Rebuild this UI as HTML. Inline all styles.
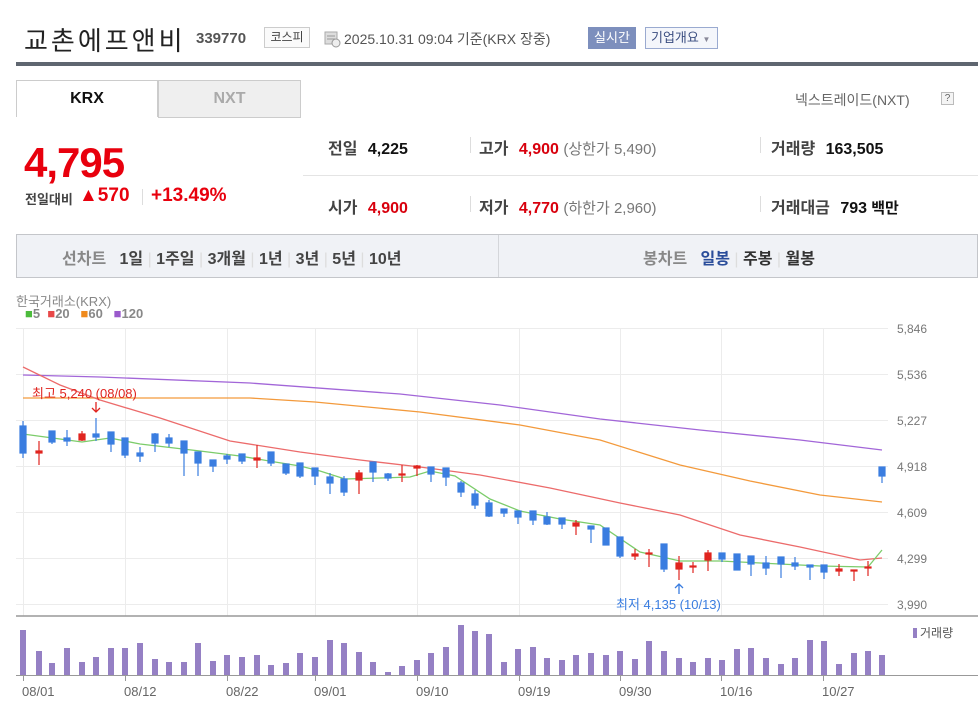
<!DOCTYPE html>
<html><head><meta charset="utf-8"><style>
*{margin:0;padding:0;box-sizing:border-box}
body{width:978px;height:716px;background:#fff;font-family:"Liberation Sans","Noto Sans CJK KR",sans-serif;position:relative;overflow:hidden;color:#333}
.a{position:absolute;white-space:nowrap}
</style></head><body>
<div class="a" style="left:24px;top:21px;font-size:26px;color:#222;letter-spacing:3px">교촌에프앤비</div>
<div class="a" style="left:196px;top:30px;font-size:15px;font-weight:bold;color:#555">339770</div>
<div class="a" style="left:264px;top:27px;width:46px;height:21px;border:1px solid #ccc;background:#fafafa;font-size:12px;color:#444;text-align:center;line-height:19px">코스피</div>
<svg class="a" style="left:324px;top:30px" width="17" height="18"><rect x="1" y="2" width="12" height="12" fill="#ddd" stroke="#aaa"/><line x1="3" y1="6" x2="11" y2="6" stroke="#999"/><line x1="3" y1="9" x2="11" y2="9" stroke="#999"/><circle cx="12" cy="13" r="4" fill="#eee" stroke="#999"/></svg>
<div class="a" style="left:344px;top:29px;font-size:14px;color:#555">2025.10.31 09:04 기준(KRX 장중)</div>
<div class="a" style="left:588px;top:27px;width:48px;height:22px;background:#7d8fbd;color:#fff;font-size:13px;text-align:center;line-height:22px">실시간</div>
<div class="a" style="left:645px;top:27px;width:73px;height:22px;border:1px solid #9aaad0;background:#f4f6fb;color:#3a4d80;font-size:13px;line-height:20px;padding-left:5px">기업개요 <span style="font-size:8px;color:#889">▼</span></div>
<div class="a" style="left:16px;top:62px;width:962px;height:4px;background:#5f6670"></div>

<div class="a" style="left:16px;top:80px;width:142px;height:37px;border:1px solid #ccc;border-bottom:none;background:#fff;font-size:16px;font-weight:bold;color:#111;text-align:center;line-height:36px">KRX</div>
<div class="a" style="left:158px;top:80px;width:143px;height:38px;border:1px solid #ccc;background:#efefef;font-size:16px;font-weight:bold;color:#aaa;text-align:center;line-height:36px">NXT</div>
<div class="a" style="left:795px;top:90px;font-size:14px;color:#666">넥스트레이드(NXT)</div>
<div class="a" style="left:941px;top:92px;width:13px;height:13px;border:1px solid #bbb;background:#f4f4f4;font-size:10px;line-height:11px;text-align:center;color:#666">?</div>

<div class="a" style="left:24px;top:139px;font-size:42px;font-weight:bold;color:#e8000d;letter-spacing:-1px">4,795</div>
<div class="a" style="left:25px;top:189px;font-size:13px;color:#444;font-weight:bold">전일대비</div>
<div class="a" style="left:79px;top:185px;font-size:19px;font-weight:bold;color:#e8000d">▲570</div>
<div class="a" style="left:142px;top:189px;width:1px;height:16px;background:#ddd"></div>
<div class="a" style="left:151px;top:185px;font-size:19px;font-weight:bold;color:#e8000d">+13.49%</div>

<div class="a" style="left:303px;top:175px;width:675px;height:1px;background:#e4e4e4"></div>
<div class="a" style="left:328px;top:135px;font-size:16px;color:#444;font-weight:bold">전일 <span style="color:#111;margin-left:6px">4,225</span></div>
<div class="a" style="left:328px;top:194px;font-size:16px;color:#444;font-weight:bold">시가 <span style="color:#d8000d;margin-left:6px">4,900</span></div>
<div class="a" style="left:470px;top:137px;width:1px;height:16px;background:#ddd"></div>
<div class="a" style="left:470px;top:196px;width:1px;height:16px;background:#ddd"></div>
<div class="a" style="left:479px;top:135px;font-size:16px;color:#444;font-weight:bold">고가 <span style="color:#d8000d;margin-left:6px">4,900</span> <span style="font-weight:normal;color:#777;font-size:15px">(상한가 5,490)</span></div>
<div class="a" style="left:479px;top:194px;font-size:16px;color:#444;font-weight:bold">저가 <span style="color:#d8000d;margin-left:6px">4,770</span> <span style="font-weight:normal;color:#777;font-size:15px">(하한가 2,960)</span></div>
<div class="a" style="left:760px;top:137px;width:1px;height:16px;background:#ddd"></div>
<div class="a" style="left:760px;top:196px;width:1px;height:16px;background:#ddd"></div>
<div class="a" style="left:771px;top:135px;font-size:16px;color:#444;font-weight:bold">거래량 <span style="color:#111;margin-left:6px">163,505</span></div>
<div class="a" style="left:771px;top:194px;font-size:16px;color:#444;font-weight:bold">거래대금 <span style="color:#111;margin-left:6px">793</span><span style="color:#111;font-size:15px"> 백만</span></div>

<div class="a" style="left:16px;top:234px;width:962px;height:44px;background:#f0f2f6;border:1px solid #c4c6ca"></div>
<div class="a" style="left:498px;top:235px;width:1px;height:42px;background:#d4d6da"></div>
<div class="a" style="left:62px;top:245px;font-size:16px;font-weight:bold;color:#444">
<span style="color:#888">선차트</span>&nbsp;&nbsp; 1일 <span style="color:#ddd;font-weight:normal">|</span> 1주일 <span style="color:#ddd;font-weight:normal">|</span> 3개월 <span style="color:#ddd;font-weight:normal">|</span> 1년 <span style="color:#ddd;font-weight:normal">|</span> 3년 <span style="color:#ddd;font-weight:normal">|</span> 5년 <span style="color:#ddd;font-weight:normal">|</span> 10년</div>
<div class="a" style="left:643px;top:245px;font-size:16px;font-weight:bold;color:#333">
<span style="color:#888">봉차트</span>&nbsp;&nbsp; <span style="color:#2a4d9a">일봉</span> <span style="color:#ddd;font-weight:normal">|</span> 주봉 <span style="color:#ddd;font-weight:normal">|</span> 월봉</div>

<div class="a" style="left:16px;top:291px;font-size:13px;color:#888">한국거래소(KRX)</div>
<div class="a" style="left:25px;top:306px;font-size:13px;font-weight:bold;color:#888"><span style="color:#4cbb3c">■</span>5 &nbsp;<span style="color:#e84848">■</span>20 &nbsp;&nbsp;<span style="color:#f08a1c">■</span>60 &nbsp;&nbsp;<span style="color:#9a5acc">■</span>120</div>

<svg class="a" style="left:0;top:0" width="978" height="716">
<g stroke="#ececec" stroke-width="1">
<line x1="16" y1="328.5" x2="888" y2="328.5"/><line x1="16" y1="374.5" x2="888" y2="374.5"/><line x1="16" y1="420.5" x2="888" y2="420.5"/><line x1="16" y1="466.5" x2="888" y2="466.5"/><line x1="16" y1="512.5" x2="888" y2="512.5"/><line x1="16" y1="558.5" x2="888" y2="558.5"/><line x1="16" y1="604.5" x2="888" y2="604.5"/>
<line x1="23.5" y1="328" x2="23.5" y2="616"/><line x1="125.5" y1="328" x2="125.5" y2="616"/><line x1="227.5" y1="328" x2="227.5" y2="616"/><line x1="315.5" y1="328" x2="315.5" y2="616"/><line x1="417.5" y1="328" x2="417.5" y2="616"/><line x1="519.5" y1="328" x2="519.5" y2="616"/><line x1="620.5" y1="328" x2="620.5" y2="616"/><line x1="721.5" y1="328" x2="721.5" y2="616"/><line x1="823.5" y1="328" x2="823.5" y2="616"/>
</g>
<line x1="16" y1="616" x2="978" y2="616" stroke="#999" stroke-width="1.5"/>
<line x1="16" y1="675.5" x2="978" y2="675.5" stroke="#999" stroke-width="1"/>
<g font-size="12" fill="#777" font-family="Liberation Sans, sans-serif">
<text x="897" y="333">5,846</text><text x="897" y="379">5,536</text><text x="897" y="425">5,227</text><text x="897" y="471">4,918</text><text x="897" y="517">4,609</text><text x="897" y="563">4,299</text><text x="897" y="609">3,990</text>
</g>
<g fill="none" stroke-width="1.3">
<polyline stroke="#a266d8" points="23,375 100,377 250,383 400,394 500,405 600,419 700,430 800,440 882,450"/>
<polyline stroke="#f39a3c" points="23,398 150,398 250,398 315,402 420,412 520,425 600,440 680,465 750,481 820,495 882,502"/>
<polyline stroke="#ec6b6b" points="23,367 60,385 100,400 160,418 230,441 300,452 360,460 420,467 480,475 550,488 620,503 680,515 740,535 800,547 860,560 882,558"/>
<polyline stroke="#7ccc6a" points="23,434 60,439 82,442 110,438 140,444 200,451 240,456 275,462 300,466 320,471 345,479 380,478 410,477 430,471 455,476 490,499 520,511 560,519 600,525 640,552 680,561 720,561 780,564 820,566 868,567 882,550"/>
</g>
<g fill="#3a7de0" stroke="#3a7de0" stroke-width="1.2">
<line x1="23" y1="421" x2="23" y2="458"/><rect x="20" y="426" width="6" height="27"/>
<line x1="52" y1="431" x2="52" y2="444"/><rect x="49" y="431" width="6" height="11"/>
<line x1="67" y1="430" x2="67" y2="446"/><rect x="64" y="438" width="6" height="3"/>
<line x1="96" y1="418" x2="96" y2="441"/><rect x="93" y="434" width="6" height="3"/>
<line x1="111" y1="432" x2="111" y2="452"/><rect x="108" y="432" width="6" height="12"/>
<line x1="125" y1="438" x2="125" y2="458"/><rect x="122" y="438" width="6" height="17"/>
<line x1="140" y1="447" x2="140" y2="462"/><rect x="137" y="453" width="6" height="3"/>
<line x1="155" y1="433" x2="155" y2="452"/><rect x="152" y="434" width="6" height="9"/>
<line x1="169" y1="434" x2="169" y2="447"/><rect x="166" y="438" width="6" height="5"/>
<line x1="184" y1="441" x2="184" y2="476"/><rect x="181" y="441" width="6" height="12"/>
<line x1="198" y1="452" x2="198" y2="476"/><rect x="195" y="452" width="6" height="11"/>
<line x1="213" y1="460" x2="213" y2="472"/><rect x="210" y="460" width="6" height="6"/>
<line x1="227" y1="454" x2="227" y2="464"/><rect x="224" y="456" width="6" height="3"/>
<line x1="242" y1="454" x2="242" y2="464"/><rect x="239" y="454" width="6" height="7"/>
<line x1="271" y1="452" x2="271" y2="466"/><rect x="268" y="452" width="6" height="11"/>
<line x1="286" y1="464" x2="286" y2="475"/><rect x="283" y="464" width="6" height="9"/>
<line x1="300" y1="463" x2="300" y2="478"/><rect x="297" y="463" width="6" height="13"/>
<line x1="315" y1="468" x2="315" y2="485"/><rect x="312" y="468" width="6" height="8"/>
<line x1="330" y1="473" x2="330" y2="494"/><rect x="327" y="477" width="6" height="6"/>
<line x1="344" y1="476" x2="344" y2="496"/><rect x="341" y="479" width="6" height="13"/>
<line x1="373" y1="462" x2="373" y2="482"/><rect x="370" y="462" width="6" height="10"/>
<line x1="388" y1="473" x2="388" y2="481"/><rect x="385" y="474" width="6" height="4"/>
<line x1="431" y1="467" x2="431" y2="482"/><rect x="428" y="467" width="6" height="7"/>
<line x1="446" y1="468" x2="446" y2="486"/><rect x="443" y="468" width="6" height="9"/>
<line x1="461" y1="481" x2="461" y2="497"/><rect x="458" y="483" width="6" height="9"/>
<line x1="475" y1="490" x2="475" y2="509"/><rect x="472" y="494" width="6" height="11"/>
<line x1="489" y1="500" x2="489" y2="517"/><rect x="486" y="503" width="6" height="13"/>
<line x1="504" y1="509" x2="504" y2="517"/><rect x="501" y="509" width="6" height="4"/>
<line x1="518" y1="511" x2="518" y2="524"/><rect x="515" y="511" width="6" height="6"/>
<line x1="533" y1="511" x2="533" y2="525"/><rect x="530" y="511" width="6" height="9"/>
<line x1="547" y1="512" x2="547" y2="525"/><rect x="544" y="517" width="6" height="7"/>
<line x1="562" y1="518" x2="562" y2="529"/><rect x="559" y="518" width="6" height="6"/>
<line x1="591" y1="526" x2="591" y2="543"/><rect x="588" y="526" width="6" height="3"/>
<line x1="606" y1="528" x2="606" y2="545"/><rect x="603" y="528" width="6" height="17"/>
<line x1="620" y1="537" x2="620" y2="558"/><rect x="617" y="537" width="6" height="19"/>
<line x1="664" y1="544" x2="664" y2="572"/><rect x="661" y="544" width="6" height="25"/>
<line x1="722" y1="553" x2="722" y2="562"/><rect x="719" y="553" width="6" height="6"/>
<line x1="737" y1="554" x2="737" y2="570"/><rect x="734" y="554" width="6" height="16"/>
<line x1="751" y1="556" x2="751" y2="576"/><rect x="748" y="556" width="6" height="8"/>
<line x1="766" y1="556" x2="766" y2="575"/><rect x="763" y="563" width="6" height="5"/>
<line x1="781" y1="557" x2="781" y2="578"/><rect x="778" y="557" width="6" height="7"/>
<line x1="795" y1="557" x2="795" y2="570"/><rect x="792" y="563" width="6" height="3"/>
<line x1="810" y1="565" x2="810" y2="580"/><rect x="807" y="565" width="6" height="2"/>
<line x1="824" y1="565" x2="824" y2="579"/><rect x="821" y="565" width="6" height="7"/>
<line x1="882" y1="467" x2="882" y2="483"/><rect x="879" y="467" width="6" height="9"/>
</g>
<g fill="#e0241f" stroke="#e0241f" stroke-width="1.2">
<line x1="39" y1="441" x2="39" y2="465"/><rect x="36" y="451" width="6" height="2"/>
<line x1="82" y1="431" x2="82" y2="441"/><rect x="79" y="434" width="6" height="6"/>
<line x1="257" y1="445" x2="257" y2="468"/><rect x="254" y="458" width="6" height="2"/>
<line x1="359" y1="470" x2="359" y2="494"/><rect x="356" y="473" width="6" height="7"/>
<line x1="402" y1="465" x2="402" y2="482"/><rect x="399" y="474" width="6" height="1"/>
<line x1="417" y1="465" x2="417" y2="476"/><rect x="414" y="466" width="6" height="2"/>
<line x1="576" y1="520" x2="576" y2="535"/><rect x="573" y="523" width="6" height="3"/>
<line x1="635" y1="549" x2="635" y2="560"/><rect x="632" y="554" width="6" height="2"/>
<line x1="649" y1="549" x2="649" y2="567"/><rect x="646" y="553" width="6" height="1"/>
<line x1="679" y1="556" x2="679" y2="580"/><rect x="676" y="563" width="6" height="6"/>
<line x1="693" y1="562" x2="693" y2="573"/><rect x="690" y="566" width="6" height="1"/>
<line x1="708" y1="550" x2="708" y2="571"/><rect x="705" y="553" width="6" height="7"/>
<line x1="839" y1="564" x2="839" y2="576"/><rect x="836" y="569" width="6" height="2"/>
<line x1="854" y1="570" x2="854" y2="581"/><rect x="851" y="570" width="6" height="1"/>
<line x1="868" y1="561" x2="868" y2="576"/><rect x="865" y="567" width="6" height="1"/>
</g>
<text x="32" y="398" font-size="13" fill="#e0241f" font-family="Liberation Sans, Noto Sans CJK KR, sans-serif">최고 5,240 (08/08)</text>
<path d="M96 402 V412 M92 408 L96 412 L100 408" stroke="#e0241f" fill="none" stroke-width="1.3"/>
<path d="M679 594 V584 M675 588 L679 584 L683 588" stroke="#3a7de0" fill="none" stroke-width="1.3"/>
<text x="616" y="609" font-size="13" fill="#3a7de0" font-family="Liberation Sans, Noto Sans CJK KR, sans-serif">최저 4,135 (10/13)</text>
<g fill="#9580c4">
<rect x="20" y="630" width="6" height="45"/><rect x="36" y="651" width="6" height="24"/><rect x="49" y="663" width="6" height="12"/><rect x="64" y="648" width="6" height="27"/><rect x="79" y="662" width="6" height="13"/><rect x="93" y="657" width="6" height="18"/><rect x="108" y="648" width="6" height="27"/><rect x="122" y="648" width="6" height="27"/><rect x="137" y="643" width="6" height="32"/><rect x="152" y="659" width="6" height="16"/><rect x="166" y="662" width="6" height="13"/><rect x="181" y="662" width="6" height="13"/><rect x="195" y="643" width="6" height="32"/><rect x="210" y="661" width="6" height="14"/><rect x="224" y="655" width="6" height="20"/><rect x="239" y="657" width="6" height="18"/><rect x="254" y="655" width="6" height="20"/><rect x="268" y="665" width="6" height="10"/><rect x="283" y="663" width="6" height="12"/><rect x="297" y="653" width="6" height="22"/><rect x="312" y="657" width="6" height="18"/><rect x="327" y="640" width="6" height="35"/><rect x="341" y="643" width="6" height="32"/><rect x="356" y="652" width="6" height="23"/><rect x="370" y="662" width="6" height="13"/><rect x="385" y="672" width="6" height="3"/><rect x="399" y="666" width="6" height="9"/><rect x="414" y="660" width="6" height="15"/><rect x="428" y="653" width="6" height="22"/><rect x="443" y="647" width="6" height="28"/><rect x="458" y="625" width="6" height="50"/><rect x="472" y="631" width="6" height="44"/><rect x="486" y="634" width="6" height="41"/><rect x="501" y="662" width="6" height="13"/><rect x="515" y="649" width="6" height="26"/><rect x="530" y="647" width="6" height="28"/><rect x="544" y="658" width="6" height="17"/><rect x="559" y="660" width="6" height="15"/><rect x="573" y="655" width="6" height="20"/><rect x="588" y="653" width="6" height="22"/><rect x="603" y="655" width="6" height="20"/><rect x="617" y="651" width="6" height="24"/><rect x="632" y="659" width="6" height="16"/><rect x="646" y="641" width="6" height="34"/><rect x="661" y="651" width="6" height="24"/><rect x="676" y="658" width="6" height="17"/><rect x="690" y="662" width="6" height="13"/><rect x="705" y="658" width="6" height="17"/><rect x="719" y="660" width="6" height="15"/><rect x="734" y="649" width="6" height="26"/><rect x="748" y="648" width="6" height="27"/><rect x="763" y="658" width="6" height="17"/><rect x="778" y="664" width="6" height="11"/><rect x="792" y="658" width="6" height="17"/><rect x="807" y="640" width="6" height="35"/><rect x="821" y="641" width="6" height="34"/><rect x="836" y="664" width="6" height="11"/><rect x="851" y="653" width="6" height="22"/><rect x="865" y="651" width="6" height="24"/><rect x="879" y="655" width="6" height="20"/>
<rect x="913" y="628" width="4" height="10"/>
</g>
<text x="920" y="637" font-size="12" fill="#555" font-family="Liberation Sans, Noto Sans CJK KR, sans-serif">거래량</text>
<g stroke="#999"><line x1="23.5" y1="676" x2="23.5" y2="681"/><line x1="125.5" y1="676" x2="125.5" y2="681"/><line x1="227.5" y1="676" x2="227.5" y2="681"/><line x1="315.5" y1="676" x2="315.5" y2="681"/><line x1="417.5" y1="676" x2="417.5" y2="681"/><line x1="519.5" y1="676" x2="519.5" y2="681"/><line x1="620.5" y1="676" x2="620.5" y2="681"/><line x1="721.5" y1="676" x2="721.5" y2="681"/><line x1="823.5" y1="676" x2="823.5" y2="681"/></g>
<g font-size="13" fill="#666" font-family="Liberation Sans, sans-serif">
<text x="22" y="696">08/01</text><text x="124" y="696">08/12</text><text x="226" y="696">08/22</text><text x="314" y="696">09/01</text><text x="416" y="696">09/10</text><text x="518" y="696">09/19</text><text x="619" y="696">09/30</text><text x="720" y="696">10/16</text><text x="822" y="696">10/27</text>
</g>
</svg>
</body></html>
